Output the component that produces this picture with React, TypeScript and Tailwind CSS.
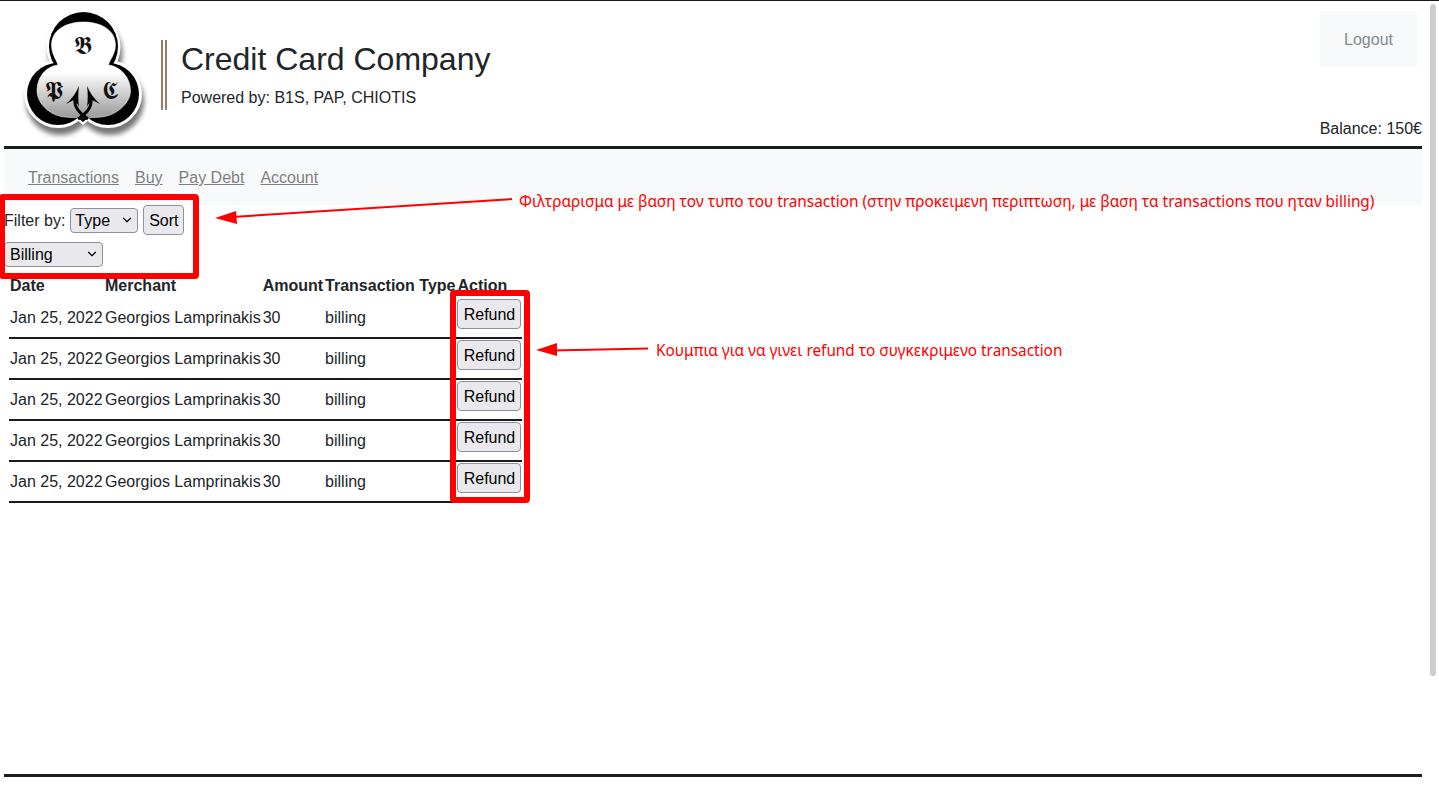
import React from 'react';
import { ChevronDown } from 'lucide-react';

const rows = [1, 2, 3, 4, 5];

const Logo = () => (
  <svg width="126" height="132" viewBox="0 0 126 132" className="shrink-0">
    <defs>
      <linearGradient id="fill" gradientUnits="userSpaceOnUse" x1="0" y1="72" x2="0" y2="120">
        <stop offset="0" stopColor="#ffffff" />
        <stop offset="1" stopColor="#949494" />
      </linearGradient>
      <filter id="blur" x="-20%" y="-20%" width="140%" height="140%">
        <feGaussianBlur stdDeviation="2.5" />
      </filter>
    </defs>
    <g transform="translate(-22 -10)">
      <g fill="#777777" filter="url(#blur)" transform="translate(2 7)">
        <circle cx="83.5" cy="47" r="37" />
        <circle cx="58" cy="94" r="34" />
        <circle cx="108" cy="94" r="34" />
      </g>
      <g fill="#ffffff">
        <circle cx="83.5" cy="47" r="37" />
        <circle cx="58" cy="94" r="34" />
        <circle cx="108" cy="94" r="34" />
        <path d="M58 60 L108 60 L112 100 L83 125 L54 100 Z" />
      </g>
      <g fill="#000000">
        <circle cx="83.5" cy="46.5" r="34.5" />
        <circle cx="58" cy="94" r="31" />
        <circle cx="108" cy="94" r="31" />
        <path d="M60 64 L107 64 L110 100 L83 122 L56 100 Z" />
      </g>
      <path
        d="M83.5 22 C101 22 115.5 30 115.5 45 C115.5 54 110 59 108.5 65 C119 66 130.5 76 130.5 91 C130.5 103 116 116 101 117 C95 117.5 90 118 84 117 C77 118 71 117.5 65 117 C50 116 37 103 37 91 C37 76 47 66 58 65 C56 59 51.5 54 51.5 45 C51.5 30 66 22 83.5 22 Z"
        fill="url(#fill)"
        stroke="#ffffff"
        strokeWidth="0.5"
      />
      <text x="82.5" y="54" textAnchor="middle" fontFamily="'DejaVu Serif', 'Liberation Serif', serif" fontSize="25" fill="#111111">𝕭</text>
      <text x="54" y="99" textAnchor="middle" fontFamily="'DejaVu Serif', 'Liberation Serif', serif" fontSize="25" fill="#111111">𝕻</text>
      <text x="110" y="99" textAnchor="middle" fontFamily="'DejaVu Serif', 'Liberation Serif', serif" fontSize="25" fill="#111111">𝕮</text>
      <path d="M75 100 C74 107 79 113 88 119 M91 100 C92 107 87 113 78 119" fill="none" stroke="#000" strokeWidth="3" />
      <path d="M79 86 C76 93 72 99 66 104 L74 100 C76 102 78 104 79 107 C78 100 78 93 79 86 Z M87 86 C90 93 94 99 100 104 L92 100 C90 102 88 104 87 107 C88 100 88 93 87 86 Z" fill="#000" />
    </g>
  </svg>
);

export default function App() {
  return (
    <div className="relative h-[789px] overflow-hidden border-t border-[#1a1a1a] bg-white font-['Liberation_Sans',Arial,sans-serif] text-base text-[#212529]">
      <div className="mx-1 w-[1418px]">
        <header className="flex h-[148px] items-start border-b-[3px] border-[#1a1e21]">
          <div className="ml-[18px] mt-[9px]">
            <Logo />
          </div>
          <div className="ml-[13px] mt-[39px] h-[70px] w-[6px] border-x-2 border-[#9b7a63]" />
          <div className="ml-[14px] mt-[39px]">
            <h1 className="text-[32px] leading-[38px] text-[#212529]">Credit Card Company</h1>
            <p className="mt-[11px] leading-[18px]">Powered by: B1S, PAP, CHIOTIS</p>
          </div>
          <div className="ml-auto flex h-full flex-col items-end">
            <a className="mr-[5px] mt-[10px] flex h-[56px] w-[97px] items-center justify-center bg-[#f8f9fa] pt-[2px] text-[#808b94]">Logout</a>
            <p className="mt-auto mb-[8px] leading-[18px]">Balance: 150€</p>
          </div>
        </header>

        <nav className="flex h-[56px] items-center gap-4 bg-[#f8f9fa] pl-6 pt-[2px]">
          <a className="text-[#80807f] underline">Transactions</a>
          <a className="text-[#80807f] underline">Buy</a>
          <a className="text-[#80807f] underline">Pay Debt</a>
          <a className="text-[#80807f] underline">Account</a>
        </nav>

        <div className="flex h-[37px] items-start">
          <span className="mt-[7px] leading-[18px]">Filter by:</span>
          <div className="relative ml-[5px] mt-[3px]">
            <select className="block h-[25px] w-[68px] appearance-none rounded-[4px] border border-[#8f8f9d] bg-[#e9e9ed] pl-[4px] text-black">
              <option>Type</option>
            </select>
            <ChevronDown className="pointer-events-none absolute right-[4px] top-[5px] h-[14px] w-[14px] text-black" strokeWidth={2} />
          </div>
          <button className="ml-[5px] h-[30px] w-[41px] rounded-[4px] border border-[#8f8f9d] bg-[#e9e9ed] pt-[2px] text-black">Sort</button>
        </div>
        <div className="flex h-[30px] items-start">
          <div className="relative">
            <select className="block h-[25px] w-[99px] appearance-none rounded-[4px] border border-[#8f8f9d] bg-[#e9e9ed] pl-[5px] text-black">
              <option>Billing</option>
            </select>
            <ChevronDown className="pointer-events-none absolute right-[4px] top-[5px] h-[14px] w-[14px] text-black" strokeWidth={2} />
          </div>
        </div>

        <table className="ml-[5px] table-fixed border-separate border-spacing-0 text-left whitespace-nowrap">
          <thead>
            <tr className="h-[19px]">
              <th className="w-[95px] px-px pt-[2px] pb-0 font-bold">Date</th>
              <th className="w-[157px] px-px pt-[2px] pb-0 font-bold">Merchant</th>
              <th className="w-[62px] px-px pt-[2px] pb-0 font-bold">Amount</th>
              <th className="w-[132px] px-px pt-[2px] pb-0 font-bold">Transaction Type</th>
              <th className="w-[66px] px-px pt-[2px] pb-0 font-bold">Action</th>
            </tr>
          </thead>
          <tbody>
            {rows.map((row) => (
              <tr key={row} className="h-[41px]">
                <td className="border-b-2 border-[#1a1a1a] p-px pt-[1px]">Jan 25, 2022</td>
                <td className="border-b-2 border-[#1a1a1a] p-px pt-[1px]">Georgios Lamprinakis</td>
                <td className="border-b-2 border-[#1a1a1a] p-px pt-[1px]">30</td>
                <td className="border-b-2 border-[#1a1a1a] p-px pt-[1px]">billing</td>
                <td className="border-b-2 border-[#1a1a1a] p-px align-top">
                  <button className="block h-[30px] w-16 rounded-[4px] border border-[#8f8f9d] bg-[#e9e9ed] pt-[2px] text-black">Refund</button>
                </td>
              </tr>
            ))}
          </tbody>
        </table>
      </div>

      <div className="absolute bottom-[12px] left-1 h-[3px] w-[1418px] bg-[#1a1e21]" />

      {/* annotations drawn over the page */}
      <div className="absolute left-[-1px] top-[193px] h-[85px] w-[200px] rounded-[4px] border-[6px] border-[#ff0000]" />
      <div className="absolute left-[450px] top-[289px] h-[213px] w-[80px] rounded-[4px] border-[6px] border-[#ff0000]" />
      <svg className="absolute left-0 top-0 h-[789px] w-[1439px]" viewBox="0 0 1439 789" fill="none">
        <path d="M512 198 L232 216" stroke="#ff0000" strokeWidth="2" />
        <path d="M215 217 L236 210 L237 223 Z" fill="#ff0000" />
        <path d="M648 347.5 L552 349.5" stroke="#ff0000" strokeWidth="2" />
        <path d="M536 349 L557 342 L557 355 Z" fill="#ff0000" />
      </svg>
      <p className="absolute left-[519px] top-[191px] font-['Noto_Sans',sans-serif] text-[15.36px] leading-[20px] whitespace-nowrap text-[#ff0000]">
        Φιλτραρισμα με βαση τον τυπο του transaction (στην προκειμενη περιπτωση, με βαση τα transactions που ηταν billing)
      </p>
      <p className="absolute left-[656px] top-[340px] font-['Noto_Sans',sans-serif] text-[15.36px] leading-[20px] whitespace-nowrap text-[#ff0000]">
        Κουμπια για να γινει refund το συγκεκριμενο transaction
      </p>

      {/* scrollbar */}
      <div className="absolute left-[1430px] top-[3px] h-[672px] w-[6px] rounded-full bg-[#cdcdcd]" />
    </div>
  );
}
